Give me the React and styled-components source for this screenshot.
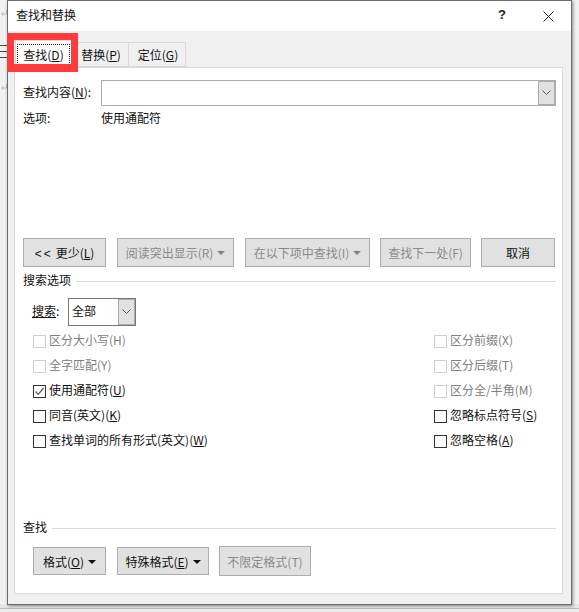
import React from "react";
import styled, { createGlobalStyle, css } from "styled-components";

const Global = createGlobalStyle`
  html, body { margin: 0; padding: 0; background: #fff; }
  body { font-family: "Noto Sans CJK SC", "Noto Sans", sans-serif; font-size: 12px; color: #111; }
`;

/* Noto CJK sits lower in its line box than the reference font: centred text is raised 2px */
const lift = css`
  padding-bottom: 4px;
  box-sizing: border-box;
`;

const Page = styled.div`
  position: relative;
  width: 579px;
  height: 612px;
  overflow: hidden;
  background: #f1f1f1;
`;
const Backdrop = styled.svg`
  position: absolute;
  left: 0;
  top: 0;
`;
const BottomEdge = styled.div`
  position: absolute;
  left: 0;
  right: 0;
  top: 604px;
  height: 8px;
  background: linear-gradient(to bottom, #e6e6e6 0, #e6e6e6 4px, #bdbdbd 4px, #bdbdbd 5px, #ececec 5px);
`;
const Dialog = styled.div`
  position: absolute;
  left: 7px;
  top: 0;
  width: 563px;
  height: 603px;
  border: 1px solid #6c6c6c;
  background: #f0f0f0;
  display: flex;
  flex-direction: column;
  box-shadow: 1px 1px 3px rgba(0, 0, 0, 0.45);
`;
const TitleBar = styled.div`
  height: 30px;
  flex: none;
  background: #fff;
  display: flex;
  align-items: center;
  padding: 0 17px 0 8px;
`;
const Title = styled.span`
  flex: 1;
  font-size: 12px;
  ${lift}
`;
const HelpMark = styled.span`
  font-family: "Liberation Sans", sans-serif;
  font-size: 13px;
  font-weight: 700;
  color: #222;
  margin-right: 37px;
  ${lift}
`;
const Body = styled.div`
  flex: 1;
  padding: 10px 8px 10px 6px;
  display: flex;
  flex-direction: column;
  min-height: 0;
`;
const TabRow = styled.div`
  display: flex;
  height: 26px;
  padding-left: 1px;
  position: relative;
  z-index: 1;
  align-items: flex-end;
`;
const Tab = styled.div`
  height: ${p => (p.$active ? 27 : 25)}px;
  width: ${p => p.$w}px;
  box-sizing: border-box;
  flex: none;
  display: flex;
  align-items: center;
  justify-content: center;
  border: 1px solid #d9d9d9;
  border-left-width: ${p => (p.$first || p.$active ? 1 : 0)}px;
  border-bottom: ${p => (p.$active ? "none" : "1px solid #d9d9d9")};
  background: ${p => (p.$active ? "#fff" : "#f0f0f0")};
`;
const TabLabel = styled.span`
  outline: ${p => (p.$focus ? "1px dotted #222" : "none")};
  padding: ${p => (p.$focus ? "1px 5px" : "0")};
  margin-left: ${p => (p.$focus ? 0 : 2)}px;
`;
const Panel = styled.div`
  flex: 1;
  min-height: 0;
  border: 1px solid #d9d9d9;
  background: #fff;
  padding: 12px 6px 0 8px;
  display: flex;
  flex-direction: column;
`;
const FindRow = styled.div`
  display: flex;
  align-items: center;
  height: 26px;
`;
const FieldLabel = styled.span`
  width: 78px;
  flex: none;
  ${lift}
`;
const ComboInput = styled.div`
  flex: 1;
  height: 26px;
  box-sizing: border-box;
  border: 1px solid #acacac;
  display: flex;
  justify-content: flex-end;
  background: #fff;
`;
const ComboArrow = styled.div`
  width: 17px;
  box-sizing: border-box;
  flex: none;
  background: #e1e1e1;
  border: 1px solid #acacac;
  display: flex;
  align-items: center;
  justify-content: center;
`;
const OptionRow = styled.div`
  display: flex;
  align-items: center;
  height: 20px;
  margin-top: 2px;
  padding-bottom: 2px;
  box-sizing: border-box;
`;
const OptionLabel = styled.span`
  width: 78px;
  flex: none;
`;
const MainButtons = styled.div`
  display: flex;
  margin-top: 110px;
  height: 29px;
  padding-right: 1px;
`;
const Btn = styled.div`
  width: ${p => p.$w}px;
  margin-left: ${p => p.$ml || 0}px;
  height: ${p => p.$h || 29}px;
  box-sizing: border-box;
  flex: none;
  display: flex;
  align-items: center;
  justify-content: center;
  gap: 4px;
  background: #e1e1e1;
  border: 1px solid #adadad;
  color: ${p => (p.$disabled ? "#8a8a8a" : "#111")};
  white-space: nowrap;
`;
const Caret = styled.span`
  width: 0;
  height: 0;
  margin-top: 1px;
  border-left: 4px solid transparent;
  border-right: 4px solid transparent;
  border-top: 4px solid ${p => (p.$disabled ? "#838383" : "#111")};
`;
const Arrows = styled.span`
  font-family: "Liberation Sans", sans-serif;
  letter-spacing: 2px;
  margin-right: 3px;
`;
const Section = styled.div`
  display: flex;
  align-items: center;
  gap: 5px;
  height: 18px;
  margin-top: ${p => p.$mt}px;
`;
const SectionLabel = styled.span`
  ${lift}
`;
const SectionLine = styled.div`
  flex: 1;
  height: 1px;
  background: #dcdcdc;
`;
const SearchRow = styled.div`
  display: flex;
  align-items: center;
  height: 28px;
  margin-top: 8px;
  padding-left: 9px;
`;
const SearchLabel = styled.span`
  width: 36px;
  flex: none;
  ${lift}
`;
const SearchSelect = styled.div`
  width: 68px;
  height: 28px;
  box-sizing: border-box;
  border: 1px solid #767676;
  display: flex;
  align-items: stretch;
`;
const SearchValue = styled.span`
  flex: 1;
  display: flex;
  align-items: center;
  padding-left: 3px;
  ${lift}
`;
const OptionsGrid = styled.div`
  display: flex;
  justify-content: space-between;
  margin-top: 3px;
  padding: 0 10px 0 10px;
`;
const Column = styled.div`
  display: flex;
  flex-direction: column;
  width: ${p => p.$w}px;
`;
const CheckRow = styled.div`
  display: flex;
  align-items: center;
  gap: 3px;
  height: 25px;
  color: ${p => (p.$disabled ? "#808080" : "#111")};
  white-space: nowrap;
`;
const CheckText = styled.span`
  ${lift}
`;
const Box = styled.span`
  width: 13px;
  height: 13px;
  box-sizing: border-box;
  flex: none;
  background: #fff;
  border: 1px solid ${p => (p.$disabled ? "#cfcfcf" : "#333")};
  display: flex;
  align-items: center;
  justify-content: center;
`;
const FormatRow = styled.div`
  display: flex;
  align-items: center;
  margin-top: 9px;
  padding-left: 10px;
`;
const RedFrame = styled.div`
  position: absolute;
  left: 7px;
  top: 33px;
  width: 71px;
  height: 39px;
  box-sizing: border-box;
  border: solid #ff3b3b;
  border-width: 7px 7px 8px 7px;
  z-index: 3;
`;
const U = styled.span`
  text-decoration: underline;
`;

const Chevron = () => (
  <svg width="9" height="6" viewBox="0 0 9 6" fill="none">
    <path d="M0.5 0.5 L4.5 4.5 L8.5 0.5" stroke="#555" strokeWidth="1" />
  </svg>
);
const Close = () => (
  <svg width="11" height="11" viewBox="0 0 11 11" fill="none">
    <path d="M0.5 0.5 L10.5 10.5 M10.5 0.5 L0.5 10.5" stroke="#222" strokeWidth="1" />
  </svg>
);
const Tick = () => (
  <svg width="11" height="11" viewBox="0 0 11 11" fill="none">
    <path d="M1.5 5.5 L4.2 8.3 L9.6 2" stroke="#555" strokeWidth="1.2" />
  </svg>
);
const BackdropFragments = () => (
  <Backdrop width="7" height="100" viewBox="0 0 7 100" fill="none">
    <path d="M6.5 10 V14 H1.5 M3.5 12 L1.5 14 L3.5 16" stroke="#bbb" />
    <path d="M0 45.5 H7 M0 51.5 H7 M0 57.5 H7" stroke="#444" />
    <path d="M6.5 84 V88 H1.5 M3.5 86 L1.5 88 L3.5 90" stroke="#bbb" />
  </Backdrop>
);

const Check = ({ label, k, disabled, checked }) => (
  <CheckRow $disabled={disabled}>
    <Box $disabled={disabled}>{checked && <Tick />}</Box>
    <CheckText>
      {label}
      {k && (
        <>
          (<U>{k}</U>)
        </>
      )}
    </CheckText>
  </CheckRow>
);

export default function App() {
  return (
    <Page>
      <Global />
      <BackdropFragments />
      <BottomEdge />
      <Dialog>
        <TitleBar>
          <Title>查找和替换</Title>
          <HelpMark>?</HelpMark>
          <Close />
        </TitleBar>
        <Body>
          <TabRow>
            <Tab $active $first $w={57}>
              <TabLabel $focus>
                查找(<U>D</U>)
              </TabLabel>
            </Tab>
            <Tab $w={57}>
              <TabLabel>
                替换(<U>P</U>)
              </TabLabel>
            </Tab>
            <Tab $w={57}>
              <TabLabel>
                定位(<U>G</U>)
              </TabLabel>
            </Tab>
          </TabRow>
          <Panel>
            <FindRow>
              <FieldLabel>
                查找内容(<U>N</U>):
              </FieldLabel>
              <ComboInput>
                <ComboArrow>
                  <Chevron />
                </ComboArrow>
              </ComboInput>
            </FindRow>
            <OptionRow>
              <OptionLabel>选项:</OptionLabel>
              <span>使用通配符</span>
            </OptionRow>
            <MainButtons>
              <Btn $w={83}>
                <span>
                  <Arrows>{"<<"}</Arrows>
                  更少(<U>L</U>)
                </span>
              </Btn>
              <Btn $w={117} $ml={11} $disabled>
                <span>阅读突出显示(R)</span>
                <Caret $disabled />
              </Btn>
              <Btn $w={125} $ml={11} $disabled>
                <span>在以下项中查找(I)</span>
                <Caret $disabled />
              </Btn>
              <Btn $w={91} $ml={10} $disabled>
                <span>查找下一处(F)</span>
              </Btn>
              <Btn $w={74} $ml={10}>
                <span>取消</span>
              </Btn>
            </MainButtons>
            <Section $mt={5}>
              <SectionLabel>搜索选项</SectionLabel>
              <SectionLine />
            </Section>
            <SearchRow>
              <SearchLabel>
                <U>搜索</U>:
              </SearchLabel>
              <SearchSelect>
                <SearchValue>全部</SearchValue>
                <ComboArrow>
                  <Chevron />
                </ComboArrow>
              </SearchSelect>
            </SearchRow>
            <OptionsGrid>
              <Column $w={200}>
                <Check disabled label="区分大小写(H)" />
                <Check disabled label="全字匹配(Y)" />
                <Check checked label="使用通配符" k="U" />
                <Check label="同音(英文)" k="K" />
                <Check label="查找单词的所有形式(英文)" k="W" />
              </Column>
              <Column $w={112}>
                <Check disabled label="区分前缀(X)" />
                <Check disabled label="区分后缀(T)" />
                <Check disabled label="区分全/半角(M)" />
                <Check label="忽略标点符号" k="S" />
                <Check label="忽略空格" k="A" />
              </Column>
            </OptionsGrid>
            <Section $mt={65}>
              <SectionLabel>查找</SectionLabel>
              <SectionLine />
            </Section>
            <FormatRow>
              <Btn $w={73} $h={28}>
                <span>
                  格式(<U>O</U>)
                </span>
                <Caret />
              </Btn>
              <Btn $w={92} $ml={11} $h={28}>
                <span>
                  特殊格式(<U>E</U>)
                </span>
                <Caret />
              </Btn>
              <Btn $w={92} $ml={10} $h={30} $disabled>
                <span>不限定格式(T)</span>
              </Btn>
            </FormatRow>
          </Panel>
        </Body>
      </Dialog>
      <RedFrame />
    </Page>
  );
}
